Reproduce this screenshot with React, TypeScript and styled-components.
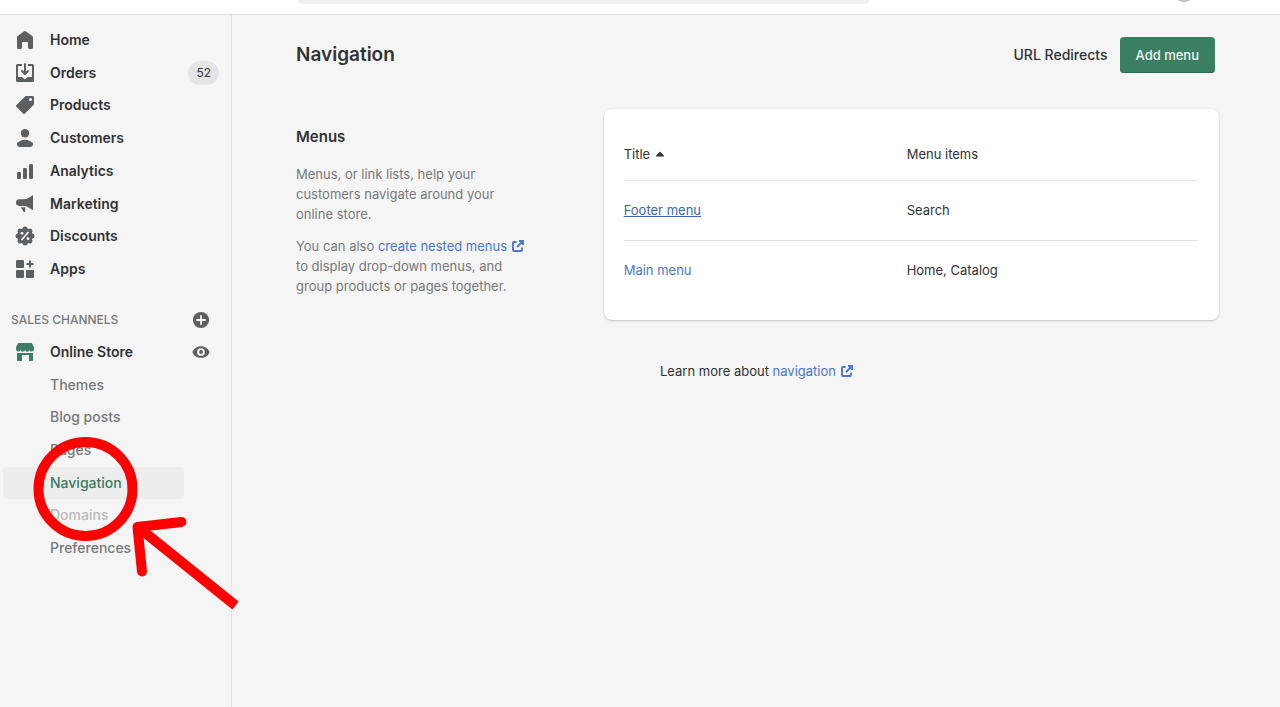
import React from "react";
import styled, { createGlobalStyle, css } from "styled-components";

const GlobalStyle = createGlobalStyle`
  *, *::before, *::after { box-sizing: border-box; }
  body {
    margin: 0;
    background: #f5f5f5;
    color: #303234;
    font: 400 14px/20px Inter, "Liberation Sans", sans-serif;
  }
  h1, h2, p, ul { margin: 0; padding: 0; }
  ul { list-style: none; }
  a { text-decoration: none; }
  button { font: inherit; border: 0; padding: 0; cursor: pointer; background: none; }
`;

const Page = styled.div`
  min-height: 100vh;
  display: flex;
  flex-direction: column;
  overflow-x: hidden;
`;

const TopBar = styled.header`
  flex: none;
  height: 15px;
  display: flex;
  align-items: flex-end;
  justify-content: space-between;
  overflow: hidden;
  padding: 0 84px 0 298px;
  background: #fff;
  border-bottom: 1px solid #dcddde;
`;

const Search = styled.input`
  flex: 0 1 571px;
  min-width: 0;
  height: 34px;
  margin-bottom: 10px;
  border: 0;
  border-radius: 4px;
  background: #f1f1f1;
`;

const Avatar = styled.button`
  flex: none;
  width: 24px;
  height: 24px;
  margin-bottom: 12px;
  border-radius: 50%;
  background: #babec1;
`;

const Body = styled.div`
  flex: 1;
  display: flex;
`;

const Sidebar = styled.nav`
  position: relative;
  flex: none;
  width: 232px;
  padding: 9px 12px 0 3px;
  border-right: 1px solid #e1e2e3;
`;

const NavList = styled.ul<{ $height: number }>`
  display: flex;
  flex-direction: column;
  justify-content: space-between;
  height: ${(p) => p.$height}px;
`;

const NavRow = styled.li`
  display: flex;
  align-items: center;
  height: 32px;
`;

const NavLink = styled.a<{ $tone?: "sub" | "active" | "faded" }>`
  flex: 1;
  display: flex;
  align-items: center;
  gap: 15px;
  height: 32px;
  padding-left: 12px;
  border-radius: 4px;
  font-weight: 600;
  color: #303234;
  ${(p) =>
    p.$tone &&
    css`
      flex: none;
      width: 181px;
      padding-left: 47px;
      font-weight: 500;
      color: #75787b;
    `}
  ${(p) =>
    p.$tone === "active" &&
    css`
      background: #ededed;
      color: #3b7a5e;
    `}
  ${(p) => p.$tone === "faded" && css`color: #b9bbbd;`}
`;

const Badge = styled.span`
  padding: 2px 8px;
  border-radius: 12px;
  background: #e4e5e7;
  font-size: 12px;
`;

const SectionHead = styled.div`
  display: flex;
  align-items: center;
  justify-content: space-between;
  height: 32px;
  margin-top: 19px;
  padding: 0 9px 0 8px;
`;

const SectionTitle = styled.h2`
  font-size: 12px;
  font-weight: 500;
  color: #75787b;
`;

const IconButton = styled.button<{ $inset?: boolean }>`
  display: flex;
  margin-right: ${(p) => (p.$inset ? 9 : 0)}px;
`;

const Glyph = styled.svg<{ $size?: number; $color?: string }>`
  flex: none;
  width: ${(p) => p.$size ?? 20}px;
  height: ${(p) => p.$size ?? 20}px;
  fill: ${(p) => p.$color ?? "#5c5f62"};
`;

const Annotation = styled.svg`
  position: absolute;
  left: 0;
  top: 415px;
  width: 250px;
  height: 190px;
  pointer-events: none;
`;

const Main = styled.main`
  flex: 1;
  min-width: 0;
  padding: 22px 61px 40px 64px;
`;

const TitleBar = styled.div`
  display: flex;
  align-items: center;
  gap: 12px;
  padding-right: 4px;
`;

const PageTitle = styled.h1`
  flex: 1;
  font-size: 19px;
  font-weight: 600;
  line-height: 28px;
`;

const TextButton = styled.button`
  font-weight: 500;
  color: #303234;
`;

const PrimaryButton = styled.button`
  height: 36px;
  padding: 0 16px;
  border-radius: 4px;
  background: #3b7f63;
  box-shadow: inset 0 -1px 0 #2d6a50;
  font-size: 13px;
  font-weight: 500;
  color: #eef5f1;
`;

const Columns = styled.div`
  display: grid;
  grid-template-columns: 1fr 2fr;
  margin-top: 36px;
`;

const Intro = styled.section`
  display: flex;
  flex-direction: column;
  gap: 12px;
  padding: 18px 70px 0 0;
  font-size: 13px;
  color: #75787b;
`;

const IntroTitle = styled.h2`
  padding-bottom: 5px;
  font-size: 15px;
  font-weight: 600;
  color: #303234;
`;

const TextLink = styled.a<{ $underlined?: boolean }>`
  white-space: nowrap;
  color: ${(p) => (p.$underlined ? "#3c66b0" : "#4a76cc")};
  text-decoration: ${(p) => (p.$underlined ? "underline" : "none")};
  svg { margin-left: 5px; vertical-align: -1px; }
`;

const Card = styled.section`
  padding: 15px 21px 20px 20px;
  border-radius: 8px;
  background: #fff;
  box-shadow: 0 1px 2px rgba(0, 0, 0, 0.18), 0 0 3px rgba(0, 0, 0, 0.06);
`;

const Table = styled.table`
  width: 100%;
  table-layout: fixed;
  border-collapse: collapse;
  font-size: 13px;
  th, td {
    height: 60px;
    padding: 0;
    text-align: left;
    font-weight: 400;
  }
  th {
    height: 56px;
    padding-top: 4px;
  }
  th:first-child { width: 283px; }
  tbody tr { border-top: 1px solid #e1e2e3; }
`;

const SortButton = styled.button`
  display: flex;
  align-items: center;
  gap: 5px;
  color: inherit;
`;

const FooterHelp = styled.p`
  padding: 41px 0 0 364px;
  font-size: 13px;
`;

const lobes = [0, 45, 90, 135, 180, 225, 270, 315];

const icons: Record<string, React.ReactNode> = {
  Home: <path d="M18 7.261V17.5c0 .841-.672 1.5-1.5 1.5h-2c-.828 0-1.5-.659-1.5-1.5V13a1 1 0 0 0-1-1H8a1 1 0 0 0-1 1v4.5c0 .841-.672 1.5-1.5 1.5h-2c-.828 0-1.5-.659-1.5-1.5V7.261a1.5 1.5 0 0 1 .615-1.21l6.59-4.82a1.481 1.481 0 0 1 1.59 0l6.59 4.82A1.5 1.5 0 0 1 18 7.261z" />,
  Orders: (
    <>
      <path d="M11 1a1 1 0 1 0-2 0v7.586L7.707 7.293a1 1 0 0 0-1.414 1.414l3 3a1 1 0 0 0 1.414 0l3-3a1 1 0 0 0-1.414-1.414L11 8.586V1z" />
      <path d="M3 14V3h4V1H2.5A1.5 1.5 0 0 0 1 2.5v15A1.5 1.5 0 0 0 2.5 19h15a1.5 1.5 0 0 0 1.5-1.5v-15A1.5 1.5 0 0 0 17.5 1H13v2h4v11h-3.5c-.775 0-1.388.662-1.926 1.244l-.11.12A1.994 1.994 0 0 1 10 16a1.994 1.994 0 0 1-1.463-.637l-.111-.12C7.888 14.664 7.275 14 6.5 14H3z" />
    </>
  ),
  Products: <path fillRule="evenodd" d="M10.293 1.293A1 1 0 0 1 11 1h7a1 1 0 0 1 1 1v7a1 1 0 0 1-.293.707l-9 9a1 1 0 0 1-1.414 0l-7-7a1 1 0 0 1 0-1.414l9-9zM15.5 6a1.5 1.5 0 1 0 0-3 1.5 1.5 0 0 0 0 3z" />,
  Customers: (
    <>
      <circle cx="10" cy="5.3" r="4.2" />
      <path d="M2.6 14.5C4 13.4 6.7 11.7 10 11.7s6 1.7 7.4 2.8c.6.5.8 1.3.6 2l-.3 1A2.1 2.1 0 0 1 15.7 19H4.3a2.1 2.1 0 0 1-2-1.500l-.3-1c-.2-.7 0-1.500.6-2z" />
    </>
  ),
  Analytics: (
    <>
      <rect x="14" y="3" width="4" height="15" rx="1.3" />
      <rect x="8" y="7" width="4" height="11" rx="1.3" />
      <rect x="2" y="11" width="4" height="7" rx="1.3" />
    </>
  ),
  Marketing: (
    <>
      <path d="M18 1.900v13.500c0 .5-.5.700-.9.400-2-1.700-4.600-3.500-7.600-3.900H4.300a3.300 3.300 0 0 1 0-6.600h4.200c3.500-.2 6.400-1.800 8.600-3.800.4-.3.900-.1.900.4z" />
      <path d="M5.800 13.300h4.400v3.900c0 .9-1.300 1.200-1.800.4z" />
    </>
  ),
  Discounts: (
    <>
      <circle cx="10" cy="10" r="7.800" />
      {lobes.map((angle) => (
        <circle key={angle} cx="10" cy="3" r="2.500" transform={`rotate(${angle} 10 10)`} />
      ))}
      <path d="M7 13.500l6-7" stroke="#f5f5f5" strokeWidth="1.800" strokeLinecap="round" />
      <circle cx="7" cy="7.300" r="1.400" fill="#f5f5f5" />
      <circle cx="13" cy="12.700" r="1.400" fill="#f5f5f5" />
    </>
  ),
  Apps: (
    <>
      <rect x="1" y="1" width="8" height="8" rx="1" />
      <rect x="1" y="11" width="8" height="8" rx="1" />
      <rect x="11" y="11" width="8" height="8" rx="1" />
      <path d="M14 2.200a1 1 0 0 1 2 0V4h1.800a1 1 0 0 1 0 2H16v1.800a1 1 0 0 1-2 0V6h-1.800a1 1 0 0 1 0-2H14z" />
    </>
  ),
};

const StoreIcon = () => (
  <Glyph viewBox="0 0 20 20" $color="#3b7f63" aria-hidden="true">
    <path d="M3.200 1h13.600L19 5.300v1.900a2.300 2.300 0 0 1-4.500.7 2.300 2.300 0 0 1-4.500 0 2.300 2.300 0 0 1-4.500 0A2.300 2.300 0 0 1 1 7.200V5.300z" />
    <path d="M2 11h16v7a1 1 0 0 1-1 1h-3v-6H7v6H3a1 1 0 0 1-1-1z" />
  </Glyph>
);

const ExternalIcon = () => (
  <Glyph viewBox="0 0 12 12" $size={12} $color="none" aria-hidden="true">
    <path d="M4.500 2H2a1 1 0 0 0-1 1v7a1 1 0 0 0 1 1h7a1 1 0 0 0 1-1V7.500M7 1h4v4M11 1L5 7" stroke="#4a76cc" strokeWidth="1.900" />
  </Glyph>
);

const mainNav = ["Home", "Orders", "Products", "Customers", "Analytics", "Marketing", "Discounts", "Apps"];

const storeNav: { label: string; tone: "sub" | "active" | "faded" }[] = [
  { label: "Themes", tone: "sub" },
  { label: "Blog posts", tone: "sub" },
  { label: "Pages", tone: "sub" },
  { label: "Navigation", tone: "active" },
  { label: "Domains", tone: "faded" },
  { label: "Preferences", tone: "sub" },
];

const menus = [
  { title: "Footer menu", items: "Search", underlined: true },
  { title: "Main menu", items: "Home, Catalog", underlined: false },
];

export default function App() {
  return (
    <Page>
      <GlobalStyle />
      <TopBar>
        <Search type="search" aria-label="Search" />
        <Avatar type="button" aria-label="Account" />
      </TopBar>
      <Body>
        <Sidebar>
          <NavList $height={261}>
            {mainNav.map((label) => (
              <NavRow key={label}>
                <NavLink href="#">
                  <Glyph viewBox="0 0 20 20" aria-hidden="true">{icons[label]}</Glyph>
                  {label}
                </NavLink>
                {label === "Orders" && <Badge>52</Badge>}
              </NavRow>
            ))}
          </NavList>
          <SectionHead>
            <SectionTitle>SALES CHANNELS</SectionTitle>
            <IconButton type="button" aria-label="Add sales channel">
              <Glyph viewBox="0 0 20 20" $size={18}>
                <circle cx="10" cy="10" r="9" />
                <path d="M10 5.500v9M5.500 10h9" stroke="#f5f5f5" strokeWidth="2" strokeLinecap="round" />
              </Glyph>
            </IconButton>
          </SectionHead>
          <NavList $height={228}>
            <NavRow>
              <NavLink href="#">
                <StoreIcon />
                Online Store
              </NavLink>
              <IconButton type="button" aria-label="View online store" $inset>
                <Glyph viewBox="0 0 20 20" $size={18}>
                  <path d="M10 3.500c5 0 8 3 9.200 5.800.2.500.2.900 0 1.400C18 13.500 15 16.500 10 16.500S2 13.500.8 10.700a1.700 1.700 0 0 1 0-1.400C2 6.500 5 3.500 10 3.500z" />
                  <circle cx="10" cy="10" r="4.300" fill="#f5f5f5" />
                  <circle cx="10" cy="10" r="2.200" />
                </Glyph>
              </IconButton>
            </NavRow>
            {storeNav.map(({ label, tone }) => (
              <NavRow key={label}>
                <NavLink href="#" $tone={tone}>{label}</NavLink>
              </NavRow>
            ))}
          </NavList>
          <Annotation viewBox="0 430 250 190" fill="none" stroke="#fe0000" aria-hidden="true">
            <circle cx="85.500" cy="489" r="47" strokeWidth="10" />
            <path d="M235.500 605.500L138 527" strokeWidth="10" />
            <path d="M181.500 522L137.500 527L142 571.500" strokeWidth="10" strokeLinecap="round" strokeLinejoin="round" />
          </Annotation>
        </Sidebar>
        <Main>
          <TitleBar>
            <PageTitle>Navigation</PageTitle>
            <TextButton type="button">URL Redirects</TextButton>
            <PrimaryButton type="button">Add menu</PrimaryButton>
          </TitleBar>
          <Columns>
            <Intro>
              <IntroTitle>Menus</IntroTitle>
              <p>Menus, or link lists, help your customers navigate around your online store.</p>
              <p>
                You can also <TextLink href="#">create nested menus<ExternalIcon /></TextLink> to display
                drop-down menus, and group products or pages together.
              </p>
            </Intro>
            <Card>
              <Table>
                <thead>
                  <tr>
                    <th scope="col" aria-sort="ascending">
                      <SortButton type="button">
                        Title
                        <Glyph viewBox="0 0 10 6" $size={10} $color="#303234" aria-hidden="true">
                          <path d="M1.400 5.500h7.200c.5 0 .7-.5.400-.8L5.500 1a.7.7 0 0 0-1 0L1 4.700c-.3.300-.1.800.4.800z" />
                        </Glyph>
                      </SortButton>
                    </th>
                    <th scope="col">Menu items</th>
                  </tr>
                </thead>
                <tbody>
                  {menus.map((menu) => (
                    <tr key={menu.title}>
                      <td><TextLink href="#" $underlined={menu.underlined}>{menu.title}</TextLink></td>
                      <td>{menu.items}</td>
                    </tr>
                  ))}
                </tbody>
              </Table>
            </Card>
          </Columns>
          <FooterHelp>
            Learn more about <TextLink href="#">navigation<ExternalIcon /></TextLink>
          </FooterHelp>
        </Main>
      </Body>
    </Page>
  );
}
